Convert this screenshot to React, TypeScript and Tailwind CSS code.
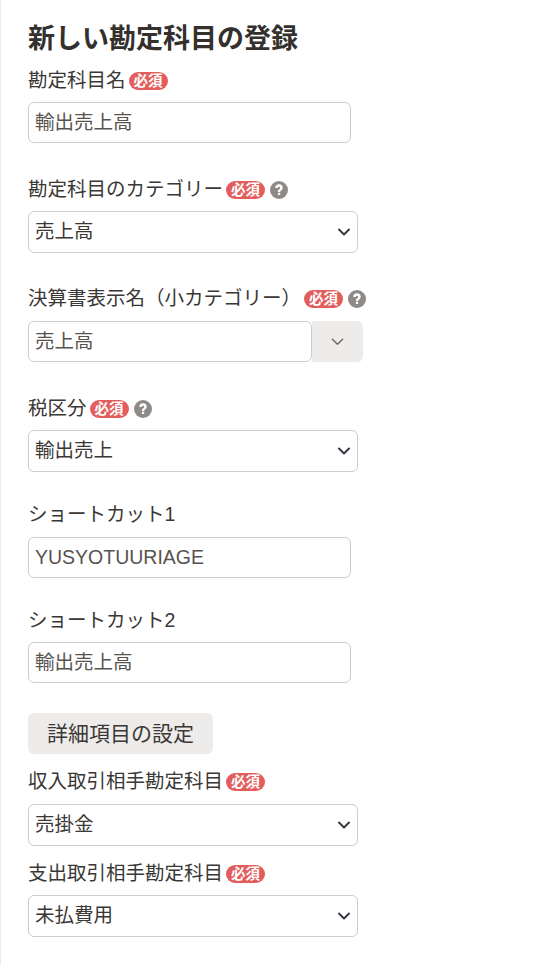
import React from "react";

const font = { fontFamily: '"Liberation Sans", "Noto Sans CJK JP", sans-serif' };

const Required = () => (
  <span className="ml-[3px] inline-flex h-[18px] w-[39px] shrink-0 items-center justify-center rounded-full bg-[#e35d5d] text-[14.5px] font-bold leading-none text-white">
    必須
  </span>
);

const Help = () => (
  <svg viewBox="0 0 18 18" className="ml-[5px] h-[18px] w-[18px] shrink-0">
    <circle cx="9" cy="9" r="9" fill="#8e8a88" />
    <path
      d="M5.3 7a3.7 3.7 0 0 1 7.4 0c0 2.3-2.5 2.4-2.5 3.9H7.9c0-2.7 2.3-2.7 2.3-3.9a1.2 1.2 0 0 0-2.4 0z"
      fill="#fff"
    />
    <rect x="7.9" y="11.8" width="2.3" height="2.3" rx="0.3" fill="#fff" />
  </svg>
);

const Label = ({ text, required, help, className }: { text: string; required?: boolean; help?: boolean; className: string }) => (
  <div className={`flex h-[24px] items-center text-[19.5px] leading-none text-[#3a3735] ${className}`}>
    <span>{text}</span>
    {required && <Required />}
    {help && <Help />}
  </div>
);

const TextInput = ({ value, className }: { value: string; className: string }) => (
  <input
    readOnly
    value={value}
    className={`block h-[41px] w-[323px] rounded-[6px] border border-[#cfcccb] bg-white px-[6px] pb-[5px] text-[19.5px] text-[#57534f] outline-none ${className}`}
  />
);

const Chevron = () => (
  <svg viewBox="0 0 16 16" className="pointer-events-none absolute right-[6px] top-[13px] h-[16px] w-[16px]">
    <path d="M3 5.5 8 10.5l5-5" fill="none" stroke="#343a40" strokeWidth="2" strokeLinecap="round" strokeLinejoin="round" />
  </svg>
);

const Select = ({ value, className }: { value: string; className: string }) => (
  <div className={`relative h-[42px] w-[330px] ${className}`}>
    <select
      defaultValue={value}
      style={font}
      className="block h-full w-full appearance-none rounded-[6px] border border-[#cfcccb] bg-white px-[6px] text-[19.5px] text-[#3a3735] outline-none"
    >
      <option>{value}</option>
    </select>
    <Chevron />
  </div>
);

export default function App() {
  return (
    <div style={font} className="h-[965px] w-[536px] overflow-hidden border-l border-[#eeeeee] bg-white pl-[27px]">
      <h1 className="pt-[23px] text-[27px] font-bold leading-[32px] text-[#33302e]">新しい勘定科目の登録</h1>

      <Label text="勘定科目名" required className="mt-[14px]" />
      <TextInput value="輸出売上高" className="mt-[9px]" />

      <Label text="勘定科目のカテゴリー" required help className="mt-[35px]" />
      <Select value="売上高" className="mt-[9px]" />

      <Label text="決算書表示名（小カテゴリー）" required help className="mt-[34px]" />
      <div className="mt-[10px] flex h-[41px] w-[335px]">
        <TextInput value="売上高" className="!w-[284px]" />
        <div className="flex flex-1 items-center justify-center rounded-r-[6px] bg-[#eeeceb]">
          <svg viewBox="0 0 16 16" className="h-[15px] w-[15px]">
            <path d="M2.5 5.5 8 11l5.5-5.5" fill="none" stroke="#6b6865" strokeWidth="1.5" strokeLinecap="round" strokeLinejoin="round" />
          </svg>
        </div>
      </div>

      <Label text="税区分" required help className="mt-[35px]" />
      <Select value="輸出売上" className="mt-[9px]" />

      <Label text="ショートカット1" className="mt-[31px]" />
      <TextInput value="YUSYOTUURIAGE" className="mt-[10px] !pb-[1px]" />

      <Label text="ショートカット2" className="mt-[31px]" />
      <TextInput value="輸出売上高" className="mt-[9px]" />

      <button className="mt-[30px] block h-[41px] w-[185px] rounded-[6px] bg-[#eeeceb] text-[21px] text-[#3a3735]">
        詳細項目の設定
      </button>

      <Label text="収入取引相手勘定科目" required className="mt-[16px]" />
      <Select value="売掛金" className="mt-[10px]" />

      <Label text="支出取引相手勘定科目" required className="mt-[16px]" />
      <Select value="未払費用" className="mt-[9px]" />
    </div>
  );
}
